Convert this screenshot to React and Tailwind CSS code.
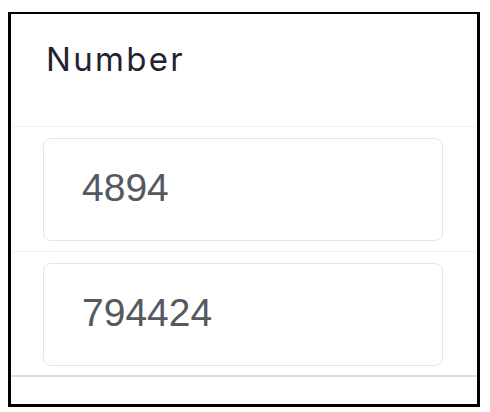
const rows = ["4894", "794424"];

export default function App() {
  return (
    <div className="min-h-screen bg-white pt-3 pl-2">
      <div className="w-[472px] h-[395px] border-[3px] border-t-2 border-black bg-white flex flex-col">
        <div className="h-[113px] pl-[35px] pt-[29px] border-b border-[#f0f0f5]">
          <span className="block leading-none text-[33px] font-normal tracking-[0.07em] text-[#1f2430] font-['Inter',sans-serif]">
            Number
          </span>
        </div>
        {rows.map((n, i) => (
          <div
            key={n}
            className={`h-[125px] pl-[32px] pt-[11px] ${
              i === rows.length - 1
                ? "border-b-2 border-[#dedede]"
                : "border-b border-[#f0f0f5]"
            }`}
          >
            <div className="w-[400px] h-[103px] border border-[#e4e6ee] rounded-[8px] flex items-center pl-[38px] pb-[4px]">
              <span className="leading-none text-[39px] text-[#555a60] font-['Liberation_Sans',Arial,sans-serif]">
                {n}
              </span>
            </div>
          </div>
        ))}
      </div>
    </div>
  );
}
